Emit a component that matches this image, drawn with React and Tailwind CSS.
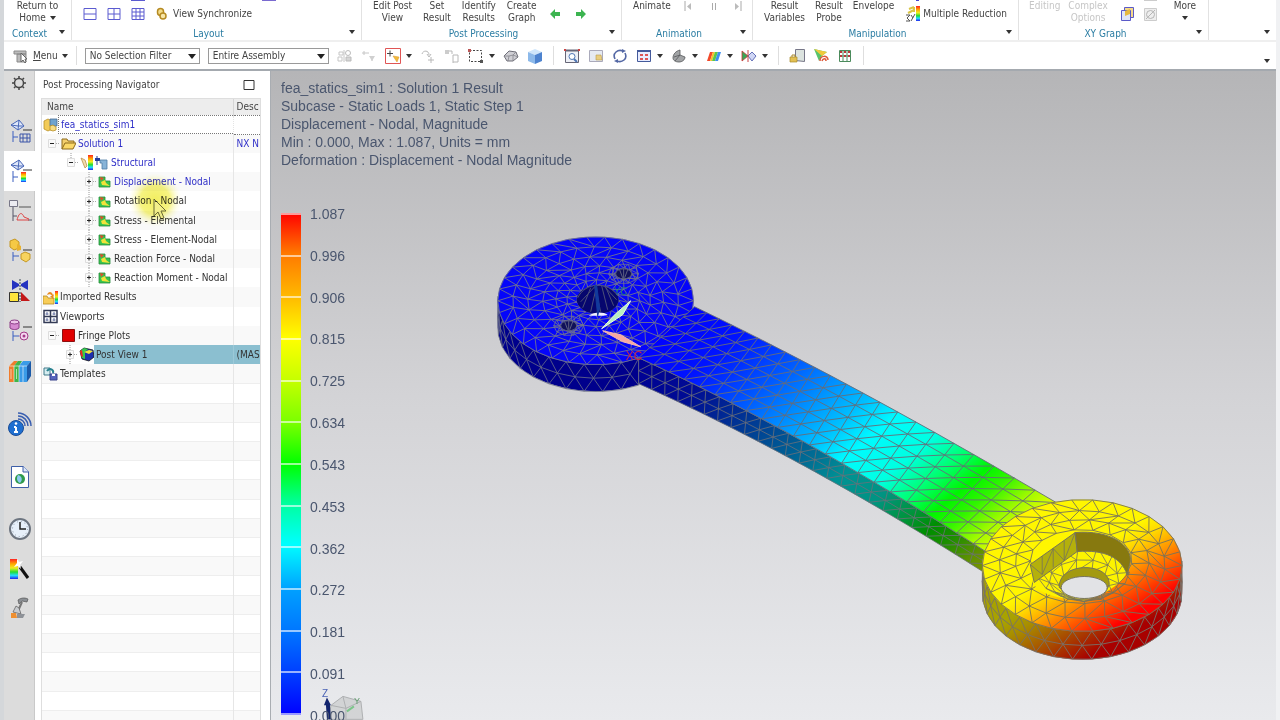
import React from "react";

/** SMALL HELPERS */
const Svg = ({ w = 16, h = 16, children }) => (
    <svg width={w} height={h} viewBox={`0 0 ${w} ${h}`} fill="none" className="shrink-0" aria-hidden="true">
        {children}
    </svg>
)

const Caret = () => (
    <Svg w={6} h={4}><path d="M0 0h6L3 4z" fill="#333" /></Svg>
)

const Rainbow = ({ id }) => (
    <linearGradient id={id} x1="0" y1="0" x2="0" y2="1">
        <stop offset="0" stopColor="#f22" />
        <stop offset=".25" stopColor="#fa0" />
        <stop offset=".45" stopColor="#ee2" />
        <stop offset=".65" stopColor="#2d3" />
        <stop offset=".82" stopColor="#2df" />
        <stop offset="1" stopColor="#22e" />
    </linearGradient>
)

/** RIBBON */
const Group = ({ label, className, children }) => (
    <section className={`flex h-10 shrink-0 flex-col justify-between border-r border-[#e2e2e2] ${className}`}>
        <div className="flex h-[26px] items-start">{children}</div>
        <div className="flex h-3 items-center pr-1.5">
            <span className="flex-1 text-center text-[#2b7da3]">{label}</span>
            <button aria-label={`${label} options`} className="pb-1 pl-1"><Caret /></button>
        </div>
    </section>
)

const Big = ({ a, b, caret, off }) => (
    <button className={off ? "whitespace-nowrap text-center text-[#c6c6c6]" : "whitespace-nowrap text-center"}>
        <span className="block">{a}</span>
        <span className="flex h-3 items-center justify-center gap-1">{b}{caret && <Caret />}</span>
    </button>
)

const Ribbon = () => (
    <header className="flex h-[42px] shrink-0 overflow-hidden border-b-2 border-[#efefef]">
        <Group label="Context" className="w-[68px]">
            <div className="flex w-full justify-center"><Big a="Return to" b="Home" caret /></div>
        </Group>

        <Group label="Layout" className="w-[290px]">
            <div className="flex items-start gap-2.5 pl-[11px]">
                <button aria-label="Two rows"><Svg w={14} h={22}><path d="M1 8.5h12v11H1zM1 14h12" stroke="#5b5bd0" /></Svg></button>
                <button aria-label="Four views"><Svg w={14} h={22}><path d="M1 8.5h12v11H1zM1 14h12M7 8.500v11" stroke="#5b5bd0" /></Svg></button>
                <button aria-label="Nine views"><Svg w={14} h={22}>
                    <path d="M0 .5h14" stroke="#5b5bd0" />
                    <path d="M1 8.500h12v11H1zM1 12h12M1 16h12M5 8.500v11M9 8.500v11" stroke="#5b5bd0" />
                </Svg></button>
                <button className="flex items-start gap-1">
                    <Svg w={14} h={22}>
                        <rect x="2.500" y="8.500" width="6" height="7" rx="3" stroke="#b58a22" strokeWidth="1.500" fill="#f3dc8a" />
                        <rect x="5" y="13" width="6" height="6" rx="3" stroke="#b58a22" strokeWidth="1.500" fill="#f7e6a8" />
                    </Svg>
                    <span className="mt-2">View Synchronize</span>
                </button>
                <Svg w={14} h={2}><path d="M0 .5h14" stroke="#7a6ad0" /></Svg>
            </div>
        </Group>

        <Group label="Post Processing" className="w-[260px]">
            <div className="flex items-start gap-[11px] pl-[11px]">
                <Big a="Edit Post" b="View" />
                <Big a="Set" b="Result" />
                <Big a="Identify" b="Results" />
                <Big a="Create" b="Graph" />
                <div className="flex gap-3.5 pl-px pt-2">
                    <button aria-label="Previous"><Svg w={12} h={12}><path d="M1 6l5-5v3h5v4H6v3z" fill="#3cb450" /></Svg></button>
                    <button aria-label="Next"><Svg w={12} h={12}><path d="M11 6L6 1v3H1v4h5v3z" fill="#3cb450" /></Svg></button>
                </div>
            </div>
        </Group>

        <Group label="Animation" className="w-[131px]">
            <div className="flex items-start gap-3 pl-[11px]">
                <button>Animate</button>
                <button aria-label="First frame"><Svg w={10} h={12}><path d="M2 1v10" stroke="#aaa" /><path d="M8 3v7L4 6.500z" fill="#bbb" /></Svg></button>
                <button aria-label="Pause" className="pl-1"><Svg w={10} h={12}><path d="M3.500 3v7M6.500 3v7" stroke="#aaa" /></Svg></button>
                <button aria-label="Last frame" className="pl-0.5"><Svg w={10} h={12}><path d="M8 1v10" stroke="#aaa" /><path d="M2 3v7l4-3.500z" fill="#bbb" /></Svg></button>
            </div>
        </Group>

        <Group label="Manipulation" className="w-[266px]">
            <div className="flex items-start gap-2.5 pl-[11px]">
                <Big a="Result" b="Variables" />
                <Big a="Result" b="Probe" />
                <Big a="Envelope" />
                <button className="flex items-start gap-0.5 pl-px">
                    <Svg w={16} h={22}>
                        <defs><Rainbow id="mr" /></defs>
                        <path d="M11 .5h3" stroke="#44c" />
                        <path d="M4 9l5-2M3 13l6-3M9 7v5" stroke="#d9c545" strokeWidth="2" />
                        <path d="M1 15h4l-3 3 3 3H1M6 21l4-7M6 15l2 3" stroke="#555" />
                        <rect x="11" y="6" width="4" height="15" fill="url(#mr)" />
                    </Svg>
                    <span className="mt-2">Multiple Reduction</span>
                </button>
            </div>
        </Group>

        <Group label="XY Graph" className="w-[190px]">
            <div className="flex items-start gap-2 pl-[10px]">
                <Big a="Editing" off />
                <Big a="Complex" b="Options" off />
                <button aria-label="Copy graph" className="pl-1"><Svg w={15} h={22}>
                    <path d="M4.500 7.500h9v10h-9z" fill="#f4d98a" stroke="#5a5ac8" />
                    <path d="M1.500 10.500h9v10h-9z" fill="#dfe4f8" stroke="#5a5ac8" />
                    <path d="M5 11l5-2v5l-5 2z" fill="#e6b840" />
                </Svg></button>
                <button aria-label="Clear graph"><Svg w={15} h={22}>
                    <path d="M1 .5h13" stroke="#ccc" />
                    <path d="M1.500 8.500h12v12h-12z" fill="#eee" stroke="#ccc" />
                    <circle cx="7.500" cy="14.500" r="4" stroke="#b5b5b5" />
                    <path d="M3 19l9-9" stroke="#b5b5b5" />
                </Svg></button>
                <div className="pl-2"><Big a="More" b="" caret /></div>
            </div>
        </Group>

        <div className="flex flex-1 items-end justify-end pb-1.5 pr-1.5">
            <button aria-label="Ribbon options"><Caret /></button>
        </div>
    </header>
)

/** SELECTION TOOLBAR */
const Tool = ({ label, drop, children }) => (
    <button aria-label={label} className="flex shrink-0 items-center gap-[5px]">
        <Svg>{children}</Svg>
        {drop && <Caret />}
    </button>
)

const Picker = ({ label, value, className }) => (
    <div className={`relative shrink-0 ${className}`}>
        <select aria-label={label} className="block h-4 w-full appearance-none border border-[#9a9a9a] bg-white pl-1 pr-4 leading-3 outline-none">
            <option>{value}</option>
        </select>
        <svg width="8" height="5" viewBox="0 0 8 5" className="pointer-events-none absolute right-1 top-1.5" aria-hidden="true">
            <path d="M0 0h8L4 5z" fill="#222" />
        </svg>
    </div>
)

const Rule = () => <span className="mx-0.5 h-[19px] w-px shrink-0 bg-[#dedede]" />

const Toolbar = () => (
    <div className="flex h-[27px] shrink-0 items-center gap-2 overflow-hidden bg-white">
        <button className="flex items-center gap-1 pl-[9px]">
            <Svg>
                <path d="M1 3h12v3H1zM4 6h9v8H4z" fill="#bcbcbc" stroke="#8a8a8a" />
                <path d="M8 5v9l2-2 2 3 1-1-1-3h2z" fill="#fff" stroke="#666" />
            </Svg>
            <span><u>M</u>enu</span>
            <Caret />
        </button>
        <span className="h-[19px] w-px shrink-0 bg-[#dedede]" />
        <Picker label="Selection filter" value="No Selection Filter" className="w-[115px]" />
        <Picker label="Selection scope" value="Entire Assembly" className="w-[121px]" />

        <Tool label="Parts">
            <path d="M2 4h4v3H2zM1 9h4v4H1zM7 2v12" stroke="#c6c6c6" />
            <circle cx="11" cy="5" r="2.500" stroke="#bbb" /><path d="M9 9h5v4H9z" fill="#d6d6d6" stroke="#bbb" />
        </Tool>
        <Tool label="Points">
            <path d="M3 3v4M1 5h7M11 8v5" stroke="#c6c6c6" /><path d="M8 8h6l-3 5z" fill="#d0d0d0" />
        </Tool>
        <Tool label="Snap point" drop>
            <path d="M.5.5h15v15H.5z" fill="#fff" stroke="#e05555" />
            <path d="M5 2.500v6M2 5.500h6" stroke="#444" />
            <path d="M8 8l6 1-2 5-2-3z" fill="#f2bb3a" stroke="#d8962a" strokeWidth=".5" />
        </Tool>
        <Tool label="Redo pick">
            <path d="M2 6c1-4 7-4 7 1M7 6l2 3 2-3M8 12h6M11 9v6" stroke="#b8b8b8" />
        </Tool>
        <Tool label="Multi pick">
            <path d="M1 3h7v3M9 7v8M9 7h5v7h-5" stroke="#b8b8b8" /><path d="M1 2h4v4H1z" fill="#ccc" />
        </Tool>
        <Tool label="Rectangle select" drop>
            <path d="M1.500 2.500h12v11h-12z" stroke="#444" strokeDasharray="2 1.500" />
            <path d="M0 1h3v3H0z" fill="#b55" /><path d="M12 12h3v3h-3z" fill="#555" />
        </Tool>
        <Tool label="Mesh part">
            <path d="M1 8l5-5 7 1 2 5-5 4-6 0z" fill="#cfcfd4" stroke="#6e6e78" />
            <path d="M5 13l1-5 4-1 5 2M6 8L1 8M10 7l3-3M10 13l0-6" stroke="#85858d" strokeWidth=".8" />
        </Tool>
        <Tool label="Solid view">
            <path d="M1 4l7-3 7 3-7 3z" fill="#cfe6fb" /><path d="M1 4l7 3v9l-7-3z" fill="#8cb9ea" /><path d="M15 4L8 7v9l7-3z" fill="#4d83cf" />
        </Tool>
        <Rule />
        <Tool label="Fit">
            <path d="M1.500 2.500h13v12h-13z" stroke="#667" fill="#eef0f6" /><path d="M1 2.500h14" stroke="#667" strokeWidth="2" />
            <circle cx="8" cy="8.500" r="3" stroke="#4f77b5" fill="#fff" /><path d="M10 11l3 3" stroke="#4f77b5" strokeWidth="2" />
            <path d="M0 1h2v2H0zM14 1h2v2h-2z" fill="#c44" />
        </Tool>
        <Tool label="Zoom window">
            <path d="M1.500 2.500h13v11h-13z" stroke="#aab" fill="#e6eaf2" /><path d="M8 7h5l1 5H8z" fill="#e9cd7f" stroke="#b99a4c" strokeWidth=".6" />
        </Tool>
        <Tool label="Rotate">
            <path d="M3 11C0 5 6 1 11 3M13 5c3 6-3 10-8 8" stroke="#5468a5" strokeWidth="1.600" />
            <path d="M10 1l4 2-4 2zM6 11l-4 2 4 2z" fill="#5468a5" />
        </Tool>
        <Tool label="Layout" drop>
            <path d="M1.500 2.500h13v11h-13z" fill="#e8ecff" stroke="#445a9b" /><path d="M1 3h14" stroke="#445a9b" strokeWidth="2" />
            <path d="M4 6h3v2H4zM9 6h3v2H9zM4 10h3v2H4zM9 10h3v2H9z" fill="#d55" />
        </Tool>
        <Tool label="Rendering" drop>
            <path d="M2 10c0-4 3-7 7-8v5l5 2c0 3-3 5-6 5-4 0-6-2-6-4z" fill="#a2a4a6" stroke="#55585a" strokeWidth=".8" />
            <path d="M3 9l6-2M4 13l5-6" stroke="#55585a" strokeWidth=".8" />
        </Tool>
        <Tool label="Fringe" drop>
            <path d="M4 4h3l-3 9H1z" fill="#f24a2a" /><path d="M7 4h2l-3 9H4z" fill="#f7c12a" /><path d="M9 4h3l-3 9H6z" fill="#5bc94a" /><path d="M12 4h3l-3 9H9z" fill="#3f8ff0" />
        </Tool>
        <Tool label="Clip" drop>
            <path d="M1 3l6 5-6 5z" fill="#3aa757" stroke="#c33" strokeWidth=".8" /><path d="M7 8l4-4 4 4-4 5z" fill="#cfd6f5" stroke="#6470b8" /><path d="M7 2v12" stroke="#c44" />
        </Tool>
        <Rule />
        <Tool label="Lock view">
            <path d="M6.500 1.500h9v12l-9-1z" fill="#dce3df" stroke="#778" /><path d="M1 9h7v5H1z" fill="#e3c052" stroke="#a8892c" strokeWidth=".7" /><path d="M3 9V7h3v2" stroke="#a8892c" />
        </Tool>
        <Tool label="Deform">
            <path d="M1 1l5 12 3-5 5-4z" fill="#58c46a" /><path d="M1 1l13 3-5 4z" fill="#f0c93a" /><path d="M7 13c0-6 8-6 8-1M9 13c1-3 4-3 4 0" stroke="#dd5a3a" strokeWidth="1.500" />
        </Tool>
        <Tool label="Point table">
            <path d="M2.500 2.500h11v11h-11zM2 8h12M6 2v12M10 2v12" stroke="#4b8b5c" />
            <path d="M3 3h2v2H3zM7 3h2v2H7zM11 3h2v2h-2zM3 7h2v2H3zM7 7h2v2H7zM11 7h2v2h-2z" fill="#b83a3a" />
        </Tool>
        <Rule />
        <button aria-label="Toolbar options" className="ml-auto self-end pb-1.5 pr-1.5"><Caret /></button>
    </div>
)

/** LEFT RESOURCE BAR */
const Tab = ({ label, active, children }) => (
    <button aria-label={label} className={active ? "flex h-10 w-[31px] shrink-0 items-center justify-center bg-white" : "flex h-10 w-[31px] shrink-0 items-center justify-center"}>
        <Svg w={24} h={26}>{children}</Svg>
    </button>
)

const meshHead = "M3 7l8-5 5 6-6 4zM3 7l7 1 6 0M11 2L10 12"

const ResourceBar = () => (
    <nav className="flex w-[31px] shrink-0 flex-col border-r border-[#c9c9c9] bg-[#dcdcdc]">
        <button aria-label="Settings" className="flex h-6 items-center justify-center">
            <Svg w={14} h={14}>
                <circle cx="7" cy="7" r="4.500" stroke="#444" strokeWidth="1.500" />
                <path d="M7 0v2M7 12v2M0 7h2M12 7h2M2 2l1.500 1.500M10.500 10.500L12 12M2 12l1.500-1.500M10.500 3.500L12 2" stroke="#444" strokeWidth="1.500" />
            </Svg>
        </button>
        <div className="flex flex-col pt-4">
            <Tab label="Simulation Navigator">
                <path d={meshHead} stroke="#4a68b8" fill="#dfe8fb" />
                <path d="M15 12h9" stroke="#333" /><path d="M5 13v11M5 19h5" stroke="#3b5fc0" />
                <path d="M12 16h10v8H12zM12 20h10M15 16v8M19 16v8" stroke="#3b55a8" />
            </Tab>
            <Tab label="Post Processing Navigator" active>
                <defs><Rainbow id="tabr" /></defs>
                <path d={meshHead} stroke="#4a68b8" fill="#dfe8fb" />
                <path d="M15 12h9" stroke="#333" /><path d="M5 13v11M5 19h5" stroke="#3b5fc0" />
                <path d="M13 14h5v10h-5z" fill="url(#tabr)" />
            </Tab>
            <Tab label="XY Function Navigator">
                <path d="M1.500 2.500h8v6h-8z" fill="#ececf2" stroke="#778" /><path d="M11 9h12" stroke="#555" />
                <path d="M5 9v14M5 18h4M20 22h4" stroke="#556" />
                <path d="M9 22c2-8 5-8 7-3l5 2M9 22h12" stroke="#d44" />
            </Tab>
            <Tab label="Assembly Navigator">
                <path d="M2 3l5-2 4 3v6l-5 2-4-3z" fill="#f5c945" stroke="#c59824" /><path d="M9 6l4 2v4l-4 1z" fill="#e8b22e" />
                <path d="M15 12h9" stroke="#333" /><path d="M5 14v9M5 18h6" stroke="#3b5fc0" />
                <path d="M13 16l4-2 5 2v5l-4 3-5-3z" fill="#f7d35f" stroke="#c59824" />
            </Tab>
            <Tab label="Constraint Navigator">
                <path d="M4 2l7 4v2l-7 4zM20 2l-7 4v2l7 4z" fill="#2433c0" /><path d="M12 1v12" stroke="#345" strokeDasharray="2 1" />
                <path d="M1.500 14.500h9v9h-9z" fill="#ffe53b" stroke="#333" /><path d="M13 14l9 9h-9z" fill="#c31818" /><path d="M12 14v10" stroke="#333" strokeDasharray="2 1" />
            </Tab>
            <Tab label="Part Navigator">
                <path d="M2 4v6c2 2 7 2 9 0V4" fill="#d58ad0" stroke="#8c3d88" /><ellipse cx="6.500" cy="4" rx="4.500" ry="2" fill="#eec4ea" stroke="#8c3d88" />
                <path d="M15 9h9" stroke="#333" /><path d="M5 13v10M5 18h6" stroke="#3b5fc0" />
                <circle cx="16" cy="18" r="4" fill="#f3d6ef" stroke="#a33a88" /><circle cx="16" cy="18" r="1.500" fill="#a33a88" />
            </Tab>
            <Tab label="Reuse Library">
                <path d="M1 8l5-5h4L6 8v16H1z" fill="#f07c2c" /><path d="M6 8l4-5h4l-3 5v16H6z" fill="#3fb54a" />
                <path d="M11 8l4-5h8l-4 5v16h-8z" fill="#3a9be8" /><path d="M19 8l4-5v15l-4 6z" fill="#1b5aa8" />
                <path d="M6 8v16M11 8v16M15 8v16M1 8h18M3 11v10M8.500 11v10" stroke="#fff" strokeOpacity=".6" />
            </Tab>
        </div>
        <div className="flex flex-col gap-3 pt-3.5">
            <Tab label="HD3D Tools">
                <circle cx="8" cy="16" r="7.500" fill="#1f6fd0" stroke="#1a4c96" /><path d="M8 15v5M6 15h2M6 20h4" stroke="#fff" strokeWidth="2" /><circle cx="8" cy="11.500" r="1.300" fill="#fff" />
                <path d="M10 7c4 0 7 3 7 7M10 4c6 0 10 5 10 10M10 1c7 0 13 6 13 13" stroke="#3a5fb0" strokeWidth="1.500" />
            </Tab>
            <Tab label="Web Browser">
                <path d="M3.500 2.500h12l5 5v16h-17z" fill="#fff" stroke="#3e5fa8" /><path d="M15 2v6h6" fill="#dbe5f6" stroke="#3e5fa8" />
                <circle cx="12" cy="15" r="5" fill="#2f9a4c" /><path d="M10 11c4 1 5 5 2 8-3-1-4-5-2-8z" fill="#8cc8f0" />
            </Tab>
            <Tab label="History">
                <circle cx="12" cy="13" r="10" fill="#e7f0fa" stroke="#6d7580" strokeWidth="2" /><circle cx="12" cy="13" r="7.500" stroke="#8f9aa8" strokeWidth="1" strokeDasharray="1 3" /><path d="M12 6v7h6" stroke="#222" strokeWidth="1.500" />
            </Tab>
        </div>
        <Tab label="Process Studio">
            <defs><Rainbow id="wand" /></defs>
            <path d="M2 3h8v20H2z" fill="url(#wand)" /><path d="M12 11l8 11" stroke="#111" strokeWidth="3" /><path d="M9 2l2 4 4-1-3 4 1 4-3-3-4 1 3-4z" fill="#fff" />
        </Tab>
        <Tab label="Roles">
            <path d="M10 4c4-3 8-2 10-1l-1 3-5-1-3 3z" fill="#8b8f94" stroke="#555" strokeWidth=".7" /><path d="M14 6l-4 9" stroke="#777" strokeWidth="2" />
            <path d="M5 16l3-6 3 2 2 6z" fill="#c9ccd0" stroke="#666" strokeWidth=".8" /><path d="M3 17h5l1 5H3z" fill="#ee8f30" /><path d="M9 18h8l-2 4H9z" fill="#8e9298" />
        </Tab>
    </nav>
)

/** NAVIGATOR TREE */
const icons = {
    sim: <Svg w={15} h={15}><path d="M1 4l4-2 4 2v8l-4 2-4-2z" fill="#f2cb58" stroke="#b98f25" strokeWidth=".8" /><path d="M7 2h7v7H7z" fill="#6fa3cf" stroke="#4a6d93" strokeWidth=".8" /><path d="M7 9l3-1 3 2v3l-3 1-3-1z" fill="#f7dc83" stroke="#b98f25" strokeWidth=".8" /></Svg>,
    folder: <Svg w={15} h={15}><path d="M1 13V3h5l1 2h6v3" fill="#f3cf6d" stroke="#8d6a1b" /><path d="M1 13l3-6h11l-3 6z" fill="#fbd968" stroke="#8d6a1b" /></Svg>,
    structural: (
        <Svg w={29} h={15}>
            <defs><Rainbow id="strr" /></defs>
            <path d="M1 3l4 2 2 6-2 2z" fill="#f3dcae" stroke="#b9924d" strokeWidth=".8" /><path d="M8 0h5v15H8z" fill="url(#strr)" />
            <path d="M15 3h5v3h-5z" fill="#223c9c" /><path d="M17 1v9" stroke="#223c9c" /><path d="M20 5h7v9h-5V8h-2z" fill="#88b4d8" stroke="#4f7ba5" strokeWidth=".8" />
        </Svg>
    ),
    result: <Svg w={14} h={13}><path d="M1 2h6v4h5v6H1z" fill="#35c44f" stroke="#2a8a3c" strokeWidth=".8" /><path d="M2 2l4 1-3 3z" fill="#e24c2c" /><path d="M3 7l4-2 1 3 4 3-8-1z" fill="#f2e23a" /></Svg>,
    imported: <Svg w={15} h={15}><defs><Rainbow id="impr" /></defs><path d="M0 14V6h4l1 2h6v6z" fill="#f8cd58" stroke="#b58b22" strokeWidth=".8" /><path d="M4 5c1-4 5-4 6 0l1-1-1 5-3-3h2c-1-2-3-2-5-1z" fill="#e88c22" /><path d="M12 1h3v13h-3z" fill="url(#impr)" /></Svg>,
    viewports: <Svg w={15} h={15}><path d="M1 1.500h13v12H1zM7.500 1v13M1 7.500h13" stroke="#333a55" strokeWidth="1.500" /><path d="M4 3v3M2.500 5h3M11 3v3M9.500 5h3M4 9v3M2.500 11h3M11 9v3M9.500 11h3" stroke="#6470a0" /></Svg>,
    fringe: <Svg w={15} h={15}><path d="M1.500 1.500h12v12h-12z" fill="#e00000" stroke="#8d1010" /></Svg>,
    post: <Svg w={15} h={15}><path d="M1 4l4-3 9 2 1 7-5 4-7-2z" fill="#1c2fae" stroke="#111" strokeWidth=".8" /><path d="M1 4l4-3 4 1-3 3v7l-3-1z" fill="#35c94a" /><path d="M1 4l2-1 1 7-2-1z" fill="#e22" /><path d="M5 5l5-2 4 1-4 3z" fill="#f3e33a" /></Svg>,
    templates: <Svg w={15} h={15}><path d="M1 2h6v7H1z" fill="#d6ecf0" stroke="#3f7a8a" /><path d="M4 5c3-4 7-1 6 2" stroke="#27818f" strokeWidth="2" /><path d="M7 8h7v6H7z" fill="#5664bd" stroke="#38438c" /><path d="M9 8h3v2H9z" fill="#fff" /></Svg>,
}

const tree = [
    { text: "fea_statics_sim1", icon: "sim", indent: "pl-px", blue: true, focus: true },
    { text: "Solution 1", icon: "folder", indent: "pl-[5px]", sign: "-", blue: true, desc: "NX N" },
    { text: "Structural", icon: "structural", indent: "pl-6", sign: "-", line: true, blue: true },
    { text: "Displacement - Nodal", icon: "result", indent: "pl-[42px]", sign: "+", line: true, blue: true },
    { text: "Rotation - Nodal", icon: "result", indent: "pl-[42px]", sign: "+", line: true },
    { text: "Stress - Elemental", icon: "result", indent: "pl-[42px]", sign: "+", line: true },
    { text: "Stress - Element-Nodal", icon: "result", indent: "pl-[42px]", sign: "+", line: true },
    { text: "Reaction Force - Nodal", icon: "result", indent: "pl-[42px]", sign: "+", line: true },
    { text: "Reaction Moment - Nodal", icon: "result", indent: "pl-[42px]", sign: "+", line: true },
    { text: "Imported Results", icon: "imported", indent: "pl-px" },
    { text: "Viewports", icon: "viewports", indent: "pl-px" },
    { text: "Fringe Plots", icon: "fringe", indent: "pl-[5px]", sign: "-" },
    { text: "Post View 1", icon: "post", indent: "pl-[23px]", sign: "+", line: true, selected: true, desc: "(MAS" },
    { text: "Templates", icon: "templates", indent: "pl-px" },
]

const blankRows = Array.from({ length: 18 }, (_, i) => i)

const Expander = ({ sign, line }) => (
    <Svg w={14} h={19}>
        {line && <path d={sign === "+" ? "M5 0v19" : "M5 0v9"} stroke="#999" strokeDasharray="1 1" />}
        <path d="M9 9.500h4" stroke="#aaa" strokeDasharray="1 1" />
        <path d="M1.500 5.500h7v8h-7z" fill="#fafafa" stroke="#ddd" />
        <path d={sign === "+" ? "M3 9.500h4M5 7.500v4" : "M3 9.500h4"} stroke="#222" />
    </Svg>
)

const textBox = (row) => {
    if (row.selected) return "flex h-full flex-1 items-center bg-[#8bbfd0] pl-0.5"
    if (row.focus) return "flex h-full flex-1 items-center border-y border-l border-dotted border-[#777] pl-0.5"
    return "flex h-full flex-1 items-center pl-0.5"
}

const descBox = (row) => {
    if (row.selected) return "overflow-hidden border-l border-[#9cc9d8] bg-[#8bbfd0] p-0 pl-[3px]"
    if (row.focus) return "overflow-hidden border-y border-l border-dotted border-y-[#777] border-l-[#e4e4e4] p-0 pl-[3px]"
    return "overflow-hidden border-l border-[#e6e6e6] p-0 pl-[3px]"
}

const Navigator = () => (
    <aside className="relative flex w-[235px] shrink-0 flex-col overflow-hidden bg-white pl-1.5 pr-[9px]">
        <div className="flex h-[27px] shrink-0 items-center justify-between pl-0.5 pr-1.5">
            <h2>Post Processing Navigator</h2>
            <button aria-label="Maximize panel"><Svg w={12} h={12}><path d="M1 1.500h10v9H1z" stroke="#333" /></Svg></button>
        </div>
        <div className="flex-1 overflow-hidden border-x border-t border-[#dedede]">
            <table className="w-full table-fixed border-collapse whitespace-nowrap text-left">
                <colgroup><col /><col className="w-[27px]" /></colgroup>
                <thead>
                    <tr className="h-4 bg-[#ededed]">
                        <th className="p-0 pl-[5px] font-normal">Name</th>
                        <th className="border-l border-[#d6d6d6] p-0 pl-[3px] font-normal">Desc</th>
                    </tr>
                </thead>
                <tbody>
                    {tree.map((row) => (
                        <tr key={row.text} className="h-[19px] even:bg-[#f9f9f9] nth-[5n]:h-5">
                            <td className="p-0">
                                <div className={`flex h-[19px] items-center ${row.indent} ${row.blue ? "text-[#3030c8]" : "text-[#333]"}`}>
                                    {row.sign && <Expander sign={row.sign} line={row.line} />}
                                    {icons[row.icon]}
                                    <span className={textBox(row)}>{row.text}</span>
                                </div>
                            </td>
                            <td className={`${descBox(row)} ${row.blue ? "text-[#3030c8]" : "text-[#333]"}`}>{row.desc}</td>
                        </tr>
                    ))}
                    {blankRows.map((i) => (
                        <tr key={i} className="h-[19px] border-t border-[#eeeeee] even:bg-[#f9f9f9] nth-[5n]:h-5">
                            <td className="p-0"></td>
                            <td className="border-l border-[#e6e6e6] p-0"></td>
                        </tr>
                    ))}
                </tbody>
            </table>
        </div>

        {/** MOUSE POINTER WITH HIGHLIGHT */}
        <svg width="54" height="54" viewBox="0 0 54 54" className="pointer-events-none absolute left-[93px] top-[102px] mix-blend-multiply" aria-hidden="true">
            <defs>
                <radialGradient id="spot">
                    <stop offset="0" stopColor="#f2ee60" />
                    <stop offset=".55" stopColor="#f6f380" />
                    <stop offset="1" stopColor="#fdfce0" stopOpacity="0" />
                </radialGradient>
            </defs>
            <circle cx="27" cy="27" r="27" fill="url(#spot)" />
            <path d="M26 26v17l4-4 3 7 3-1-3-7h5z" fill="#f4f08a" stroke="#6b6a35" />
        </svg>
    </aside>
)

/** FEA MODEL */
const rad = (d) => (d * Math.PI) / 180
const pt = (p) => `${p[0].toFixed(1)} ${p[1].toFixed(1)}`
const seg = (a, b) => `M${pt(a)}L${pt(b)}`

const ring = (cx, cy, rx, ry, n, off = 0) =>
    Array.from({ length: n }, (_, i) => {
        const a = rad(off + (360 * i) / n)
        return [cx + rx * Math.cos(a), cy + ry * Math.sin(a)]
    })

// joins every ring to the next one with triangles
const stitch = (rings) => {
    let d = ""
    rings.forEach((r, k) => {
        r.forEach((p, i) => { d += seg(p, r[(i + 1) % r.length]) })
        const q = rings[k + 1]
        if (!q) return
        let i = 0
        let j = 0
        while (i < r.length || j < q.length) {
            d += seg(r[i % r.length], q[j % q.length])
            if ((i + 1) / r.length <= (j + 1) / q.length) i++
            else j++
        }
    })
    return d
}

const sideMesh = (cx, cy, rx, ry, h, from, to, n) => {
    let d = ""
    const at = (i, y) => {
        const a = rad(from + ((to - from) * i) / n)
        return [cx + rx * Math.cos(a), cy + ry * Math.sin(a) + y]
    }
    for (let i = 0; i < n; i++) {
        const m = at(i + 0.5, h / 2)
        d += seg(at(i, 0), m) + seg(m, at(i + 1, 0)) + seg(at(i, h), m) + seg(m, at(i + 1, h))
        d += seg(at(i, 0), at(i + 1, 0)) + seg(at(i, h), at(i + 1, h))
        if (i < n - 1) d += seg(m, at(i + 1.5, h / 2))
    }
    return d
}

const quad = (a, b, c) => (t) => [0, 1].map((k) => (1 - t) * (1 - t) * a[k] + 2 * t * (1 - t) * b[k] + t * t * c[k])
const upper = quad([694, 307], [860, 387], [1056, 503])
const lower = quad([638, 358], [804, 434], [990, 555])
const bottom = quad([638, 384], [800, 456], [984, 573])

// lean pulls the middle of edge a back, so the cross lines stand steeper there
const gridMesh = (a, b, nx, ny, lean = 0) => {
    const at = (i, j) => {
        const t = i / nx
        const p = a(t - lean * Math.sin(Math.PI * t))
        const q = b(t)
        return [p[0] + ((q[0] - p[0]) * j) / ny, p[1] + ((q[1] - p[1]) * j) / ny]
    }
    let d = ""
    for (let i = 0; i <= nx; i++) {
        for (let j = 0; j <= ny; j++) {
            if (i < nx) d += seg(at(i, j), at(i + 1, j))
            if (j < ny) d += seg(at(i, j), at(i, j + 1))
            if (i < nx && j < ny) d += seg(at(i, j + 1), at(i + 1, j))
        }
    }
    return d
}

const leftMesh = stitch([
    ring(595, 301, 98, 64, 34),
    ring(595, 301, 83, 54, 30, 5),
    ring(595, 301, 68, 44, 26, 2),
    ring(596, 301, 54, 35, 23, 7),
    ring(597, 300, 42, 27, 20, 2),
    ring(597, 300, 31, 20, 18, 8),
    ring(597, 300, 21, 14, 15, 2),
])
const leftSide = sideMesh(595, 301, 98, 64, 27, 64, 184, 11)
const armTop = gridMesh(upper, lower, 22, 5, 0.06)
const armSide = gridMesh(lower, bottom, 25, 2)
const rightMesh = stitch([
    ring(1082, 566, 100, 66, 30),
    ring(1082, 565, 83, 54, 26, 5),
    ring(1082, 562, 67, 42, 21, 2),
    ring(1081, 560, 51, 30, 17, 8),
])
const rightSide = sideMesh(1082, 566, 100, 66, 28, -4, 184, 17)
const floorMesh = stitch([ring(1083, 573, 46, 27, 15), ring(1084, 581, 35, 21, 13, 8), ring(1084, 586, 25, 15, 10)])

const armTopShape = "M694 307Q860 387 1056 503L990 555Q804 434 638 358Z"
const armSideShape = "M638 358Q804 434 990 555L984 573Q800 456 638 384Z"

const armStops = [
    [0, "#0000ff"], [0.1, "#0014ff"], [0.2, "#0055ff"], [0.29, "#0094ff"], [0.35, "#00beff"], [0.41, "#00faff"], [0.49, "#00ffe0"],
    [0.55, "#00ff6e"], [0.6, "#00f500"], [0.64, "#32f500"], [0.69, "#a0fa00"], [0.75, "#faff00"], [1, "#fff000"],
]
const diskStops = [[0, "#fff600"], [0.2, "#ffd800"], [0.5, "#ff8c00"], [0.9, "#ff1e00"], [1, "#ff0000"]]

const Field = ({ id, from, to, dy, stops }) => (
    <linearGradient id={id} gradientUnits="userSpaceOnUse" x1={from[0]} y1={from[1] + dy} x2={to[0]} y2={to[1] + dy}>
        {stops.map(([o, c]) => <stop key={o} offset={o} stopColor={c} />)}
    </linearGradient>
)

const Model = () => (
    <svg viewBox="270 71 1006 649" preserveAspectRatio="xMinYMin meet" className="absolute inset-0 h-full w-full" role="img" aria-label="Displacement result on the arm">
        <defs>
            <Field id="top" from={[640, 351]} to={[972, 751]} dy={0} stops={armStops} />
            <Field id="side" from={[640, 351]} to={[972, 751]} dy={14} stops={armStops} />
            <Field id="disk" from={[543, 887]} to={[582, 951]} dy={0} stops={diskStops} />
            <Field id="rim" from={[543, 887]} to={[582, 951]} dy={16} stops={diskStops} />
        </defs>

        {/** LEFT END */}
        <path d="M497 301v27A98 64 0 0 0 638 385V340z" fill="#00008c" />
        <path d={leftSide} stroke="#6b6f86" strokeWidth=".8" fill="none" />
        <ellipse cx="595" cy="301" rx="98" ry="64" fill="#0505fa" />
        <path d={leftMesh} stroke="#70748e" strokeWidth=".9" fill="none" />
        <ellipse cx="597" cy="300" rx="21" ry="14" fill="#06066e" />
        <path d="M577 298c8-16 30-17 40-2M582 308l8-20M590 312l6-26M600 312l-6-26M607 310l-6-24M613 306l-8-19M580 302l14-15M616 300l-12-13" stroke="#4c5078" fill="none" />
        <path d="M588 316c6-4 14-4 19-1l-4 1z" fill="#eef" />
        {[[568, 326], [623, 274]].map(([x, y]) => (
            <g key={x}>
                <path d={stitch([ring(x, y, 15, 10, 10), ring(x, y, 9, 6, 8)])} stroke="#70748e" strokeWidth=".8" fill="none" />
                <ellipse cx={x} cy={y} rx="8" ry="5" fill="#10105a" stroke="#5b5f80" />
                <path d={`M${x - 4} ${y - 4}l3 8M${x + 4} ${y - 4}l-3 8M${x} ${y - 5}v10`} stroke="#5b5f80" />
            </g>
        ))}

        {/** ARM */}
        <path d={armSideShape} fill="url(#side)" />
        <path d={armSideShape} fill="#000" fillOpacity=".42" />
        <path d={armSide} stroke="#6c7078" strokeWidth=".8" fill="none" />
        <path d={armTopShape} fill="url(#top)" />
        <path d={armTop} stroke="#666c78" strokeWidth=".9" fill="none" />

        {/** RIGHT END */}
        <path d="M982 566v28A100 66 0 0 0 1182 594V566z" fill="url(#rim)" />
        <path d="M982 566v28A100 66 0 0 0 1182 594V566z" fill="#000" fillOpacity=".34" />
        <path d={rightSide} stroke="#77706a" strokeWidth=".9" fill="none" />
        <ellipse cx="1082" cy="566" rx="100" ry="66" fill="url(#disk)" />
        <path d={rightMesh} stroke="#76735a" strokeWidth=".9" fill="none" />
        <path d="M1030 565L1075 533C1110 530 1133 546 1130 563C1128 580 1110 594 1084 601C1060 600 1036 594 1032 582Z" fill="#fdf300" />
        <path d={floorMesh} stroke="#76735a" strokeWidth=".8" fill="none" />
        <path d="M1030 565L1075 533L1077 552L1034 583Z" fill="#b4b00c" stroke="#76735a" />
        <path d="M1075 533C1110 530 1133 546 1130 563L1127 575C1121 558 1105 550 1077 552Z" fill="#87790f" stroke="#76735a" />
        <path d="M1042 557v18M1053 549v19M1064 541v20M1030 565l12 10 11-26 11 12 11-28" stroke="#76735a" strokeWidth=".8" fill="none" />
        <path d="M1059 588C1058 562 1110 562 1109 585L1106 590H1062Z" fill="#a39a10" stroke="#76735a" />
        <ellipse cx="1084" cy="588" rx="23" ry="11" fill="#e2e3e6" stroke="#76735a" />

        {/** CSYS TRIAD */}
        <path d="M594 286l3 30 2-8-3-22z" fill="#123a9c" stroke="#123a9c" />
        <path d="M601 329l14-15 15-13-8 14z" fill="#b9f0c0" stroke="#e4f7e6" />
        <path d="M602 331l18 4 20 12-18-5z" fill="#f7a9a0" stroke="#f3b8b4" />
        <text x="625" y="360" fontSize="12" fill="#c8284a" fontFamily="Liberation Sans, sans-serif">XC</text>
        <text x="613" y="295" fontSize="10" fill="#1f7f7a" fontFamily="Liberation Sans, sans-serif">YC</text>

        {/** VIEW TRIAD */}
        <path d="M330 706l12-9 18 5 2 18h-34z" fill="#c9cbcc" fillOpacity=".7" stroke="#aeb0b2" />
        <path d="M342 697l3 12 15-7M345 709v11M345 709l-15-3" stroke="#aeb0b2" fill="none" />
        <path d="M346 712l7-5" stroke="#7cc58a" strokeWidth="2" />
        <path d="M326 698l-3 8h2l1 14h4l-1-14h1z" fill="#12246e" />
        <text x="321" y="698" fontSize="10" fill="#4a62b5" fontFamily="Liberation Sans, sans-serif">Z</text>
        <text x="353" y="705" fontSize="9" fill="#5f9a6c" fontFamily="Liberation Sans, sans-serif">Y</text>
    </svg>
)

const info = [
    "fea_statics_sim1 : Solution 1 Result",
    "Subcase - Static Loads 1, Static Step 1",
    "Displacement - Nodal, Magnitude",
    "Min : 0.000, Max : 1.087, Units = mm",
    "Deformation : Displacement - Nodal Magnitude",
]

const levels = ["1.087", "0.996", "0.906", "0.815", "0.725", "0.634", "0.543", "0.453", "0.362", "0.272", "0.181", "0.091", "0.000"]

const Viewport = () => (
    <main className="relative flex-1 overflow-hidden border-l border-[#a9adb2] bg-linear-to-b from-[#b5b5b7] via-[#d3d3d6] to-[#e9eaed] pl-2.5 pt-2 font-['Liberation_Sans',Arial,sans-serif] text-sm leading-[18px] text-[#4a566e]">
        <Model />
        <div className="relative">
            {info.map((line) => <p key={line}>{line}</p>)}
        </div>
        <div className="relative mt-9 flex gap-[9px]">
            <div className="mt-2 flex h-[502px] w-5 flex-col justify-between bg-[linear-gradient(to_bottom,#ff0000,#ff7800_8%,#ffb400_16%,#ffff00_25%,#c8ff00_33%,#78ff00_42%,#00ff00_50%,#00ffa0_58%,#00ffff_66%,#00a0ff_75%,#0078ff_83%,#003cff_92%,#0000ff)]">
                {levels.map((v) => <span key={v} className="h-0.5 bg-white/60" />)}
            </div>
            <div className="flex h-[520px] flex-col justify-between">
                {levels.map((v) => <span key={v}>{v}</span>)}
            </div>
        </div>
    </main>
)

const App = () => {
    return (
        <div className="flex h-screen flex-col overflow-hidden border-l-4 border-r-4 border-l-[#d4d7da] border-r-[#f0f1f3] bg-white font-['DejaVu_Sans_Condensed','Noto_Sans',sans-serif] text-[10px] leading-3 text-[#444]">
            <Ribbon />
            <Toolbar />
            <div className="h-0.5 shrink-0 bg-[#a4a9af]" />
            <div className="flex min-h-0 flex-1">
                <ResourceBar />
                <Navigator />
                <Viewport />
            </div>
        </div>
    )
}

export default App;
